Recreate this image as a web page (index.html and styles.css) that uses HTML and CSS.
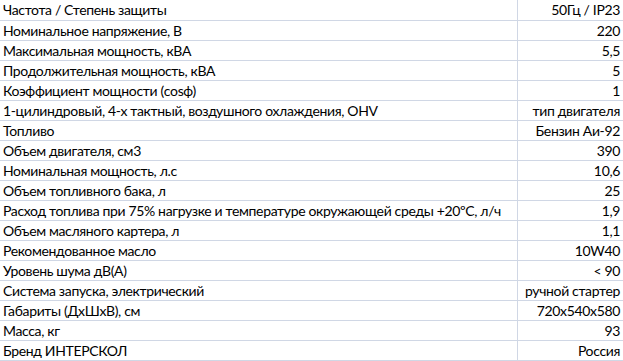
FILE: index.html
```html
<!DOCTYPE html>
<html lang="ru">
<head>
<meta charset="utf-8">
<link rel="stylesheet" href="styles.css">
</head>
<body>
<table class="specs">
<colgroup><col class="c-name"><col class="c-val"></colgroup>
<tr><td class="name">Частота / Степень защиты</td><td class="val">50Гц / IP23</td></tr>
<tr><td class="name">Номинальное напряжение, В</td><td class="val">220</td></tr>
<tr><td class="name">Максимальная мощность, кВА</td><td class="val">5,5</td></tr>
<tr><td class="name">Продолжительная мощность, кВА</td><td class="val">5</td></tr>
<tr><td class="name">Коэффициент мощности (cosф)</td><td class="val">1</td></tr>
<tr><td class="name">1-цилиндровый, 4-х тактный, воздушного охлаждения, OHV</td><td class="val">тип двигателя</td></tr>
<tr><td class="name">Топливо</td><td class="val">Бензин Аи-92</td></tr>
<tr><td class="name">Объем двигателя, см3</td><td class="val">390</td></tr>
<tr><td class="name">Номинальная мощность, л.с</td><td class="val">10,6</td></tr>
<tr><td class="name">Объем топливного бака, л</td><td class="val">25</td></tr>
<tr><td class="name">Расход топлива при 75% нагрузке и температуре окружающей среды +20ºС, л/ч</td><td class="val">1,9</td></tr>
<tr><td class="name">Объем масляного картера, л</td><td class="val">1,1</td></tr>
<tr><td class="name">Рекомендованное масло</td><td class="val">10W40</td></tr>
<tr><td class="name">Уровень шума дВ(А)</td><td class="val">&lt; 90</td></tr>
<tr><td class="name">Система запуска, электрический</td><td class="val">ручной стартер</td></tr>
<tr><td class="name">Габариты (ДхШхВ), см</td><td class="val">720x540x580</td></tr>
<tr><td class="name">Масса, кг</td><td class="val">93</td></tr>
<tr><td class="name">Бренд ИНТЕРСКОЛ</td><td class="val">Россия</td></tr>
</table>
</body>
</html>
```
FILE: styles.css
```css
html, body {
  margin: 0;
  padding: 0;
  background: #ffffff;
}
.specs {
  border-collapse: collapse;
  table-layout: fixed;
  width: 623px;
  font-family: Lato, "Open Sans", sans-serif;
  font-size: 14px;
  letter-spacing: -0.35px;
  color: #000000;
}
.c-name { width: 517px; }
.c-val { width: 106px; }
.specs td {
  height: 20px;
  padding: 1px 3px 0 3px;
  border-bottom: 1px solid #d0d7e5;
  white-space: nowrap;
  line-height: 18px;
  box-sizing: border-box;
  overflow: hidden;
}
.specs td.name {
  border-right: 1px solid #d0d7e5;
  text-align: left;
}
.specs td.val {
  text-align: right;
}
```
